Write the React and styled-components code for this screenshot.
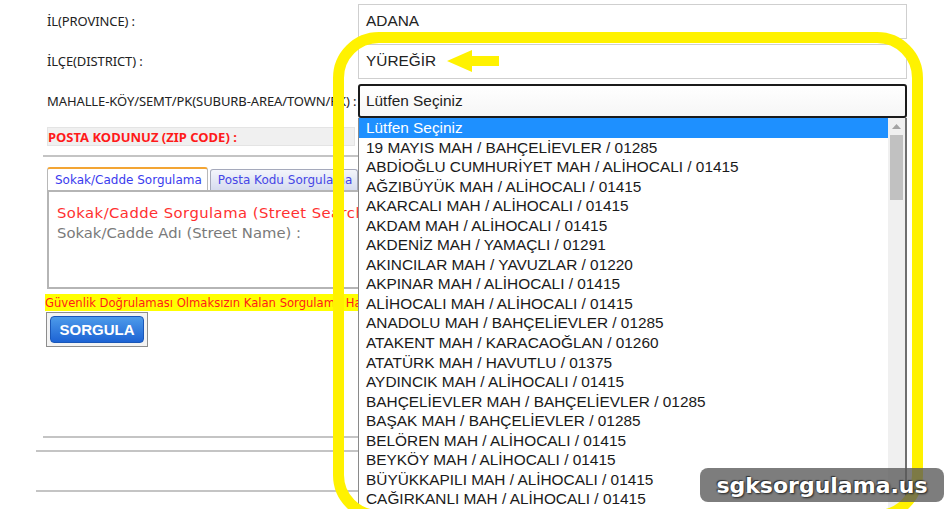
import React from 'react';
import styled, { createGlobalStyle } from 'styled-components';

const GlobalStyle = createGlobalStyle`
    html, body {
        margin: 0;
        padding: 0;
        background: #ffffff;
    }
    body {
        font-family: "Liberation Sans", Arial, sans-serif;
    }
`;

const Page = styled.div`
    position: relative;
    width: 945px;
    height: 509px;
    overflow: hidden;
    background: #ffffff;
`;

const FormArea = styled.div`
    padding: 1px 0 0 47px;
    width: 860px;
`;

const FieldRow = styled.div`
    display: grid;
    grid-template-columns: 311px 549px;
    align-items: center;
    height: ${props => props.h || 40}px;
`;

const Label = styled.div`
    font-family: "Noto Sans", "Open Sans", sans-serif;
    font-size: 13px;
    color: #222;
    white-space: nowrap;
    letter-spacing: -0.1px;
`;

const ZipLabel = styled.div`
    grid-column: 1 / 2;
    align-self: start;
    background: #f0f0f0;
    border: 1px solid #e4e4e4;
    height: 19px;
    line-height: 18px;
    font-family: "Noto Sans", "Open Sans", sans-serif;
    font-size: 13px;
    font-weight: bold;
    color: #ff1a1a;
    box-sizing: border-box;
    width: 308px;
    margin-top: 6px;
`;

const TextBox = styled.div`
    height: 35px;
    box-sizing: border-box;
    border: 1px solid #cfcfcf;
    display: flex;
    align-items: center;
    padding-left: 7px;
    font-size: 15.4px;
    color: #222;
`;

const SelectWrap = styled.div`
    position: relative;
    height: 34px;
`;

const SelectBox = styled.div`
    height: 34px;
    box-sizing: border-box;
    border: 2px solid #1b1b1b;
    border-radius: 3px;
    background: linear-gradient(#ffffff, #f6f6f6);
    display: flex;
    align-items: center;
    padding-left: 6px;
    font-size: 15.4px;
    color: #222;
`;

const DropList = styled.div`
    position: absolute;
    left: 0;
    top: 34px;
    width: 549px;
    height: 400px;
    box-sizing: border-box;
    border-left: 1px solid #8a8a8a;
    border-right: 2px solid #6f6f6f;
    background: #ffffff;
    display: grid;
    grid-template-columns: 1fr 17px;
    z-index: 2;
`;

const Options = styled.div`
    display: flex;
    flex-direction: column;
`;

const Option = styled.div`
    height: 19.55px;
    line-height: 19.5px;
    padding-left: 7px;
    font-size: 15.4px;
    white-space: nowrap;
    color: ${props => (props.selected ? '#ffffff' : '#1a1a1a')};
    background: ${props => (props.selected ? '#1e90ff' : 'transparent')};
`;

const ScrollTrack = styled.div`
    background: #f0f0f0;
    display: flex;
    flex-direction: column;
    align-items: center;
    padding-top: 6px;
`;

const ScrollThumb = styled.div`
    width: 13px;
    height: 65px;
    margin-top: 6px;
    background: #c1c1c1;
`;

const Rule = styled.div`
    height: 0;
    border-top: 2px solid #c4c4c4;
    margin-left: ${props => props.left}px;
    margin-top: ${props => props.top}px;
    width: ${props => 907 - props.left}px;
`;

const TabsArea = styled.div`
    margin: 10px 0 0 47px;
    width: 860px;
`;

const TabBar = styled.div`
    display: flex;
    gap: 2px;
    height: 23px;
    align-items: flex-end;
`;

const Tab = styled.div`
    height: ${props => (props.active ? 23 : 21)}px;
    box-sizing: border-box;
    padding: 0 5px 0 7px;
    display: flex;
    align-items: center;
    font-family: "DejaVu Sans", Verdana, sans-serif;
    font-size: 12px;
    color: ${props => (props.active ? '#3b3bee' : '#4646e6')};
    border: 1px solid ${props => (props.active ? '#b8b8b8' : '#a5a9bb')};
    border-top: ${props => (props.active ? '2px solid #f3a534' : '1px solid #a5a9bb')};
    border-bottom: none;
    border-radius: 3px 3px 0 0;
    background: ${props => (props.active ? '#ffffff' : 'linear-gradient(#f3f5fb, #d6dcef)')};
    white-space: nowrap;
`;

const TabPanel = styled.div`
    height: 99px;
    box-sizing: border-box;
    border: 2px solid #b5b5b5;
    padding: 11px 0 0 8px;
    font-family: "DejaVu Sans", Verdana, sans-serif;
    font-size: 14.8px;
    line-height: 20px;
`;

const PanelTitle = styled.div`
    color: #ff3030;
    letter-spacing: 0.45px;
`;

const PanelField = styled.div`
    color: #7a7a7a;
`;

/* the open option list covers the rest of this bar */
const Notice = styled.div`
    margin: 5px 0 0 45px;
    height: 17px;
    line-height: 17px;
    width: max-content;
    padding-right: 2px;
    background: #ffff00;
    color: #ff1a1a;
    font-family: "DejaVu Sans Condensed", "DejaVu Sans", sans-serif;
    font-size: 12.9px;
    white-space: nowrap;
`;

const ButtonFrame = styled.div`
    margin: 1px 0 0 46px;
    width: 102px;
    height: 35px;
    box-sizing: border-box;
    border: 1px solid #8d8d8d;
    padding: 3px;
    background: #f3f3f3;
`;

const SubmitButton = styled.div`
    height: 100%;
    border-radius: 4px;
    background: linear-gradient(#4d9bea, #1d63d4);
    border: 1px solid #1a57b8;
    box-sizing: border-box;
    display: flex;
    align-items: center;
    justify-content: center;
    color: #ffffff;
    font-family: "Liberation Sans", Arial, sans-serif;
    font-weight: bold;
    font-size: 15px;
`;

const HighlightFrame = styled.div`
    position: absolute;
    left: 333px;
    top: 32px;
    width: 590px;
    height: 489px;
    box-sizing: border-box;
    border: 11px solid #fff200;
    border-radius: 46px;
    z-index: 3;
    pointer-events: none;
`;

const Arrow = styled.svg`
    position: absolute;
    left: 447px;
    top: 50px;
    z-index: 3;
`;

const Watermark = styled.div`
    position: absolute;
    left: 700px;
    top: 468px;
    width: 244px;
    height: 34px;
    border-radius: 8px;
    background: rgba(88, 88, 88, 0.78);
    z-index: 4;
    display: flex;
    align-items: center;
    justify-content: center;
    font-family: "DejaVu Sans", Verdana, sans-serif;
    font-weight: bold;
    font-size: 22px;
    color: #ffffff;
    text-shadow: 1px 1px 2px #222, -1px -1px 1px #333;
`;

const neighbourhoods = [
    'Lütfen Seçiniz',
    '19 MAYIS MAH / BAHÇELİEVLER / 01285',
    'ABDİOĞLU CUMHURİYET MAH / ALİHOCALI / 01415',
    'AĞZIBÜYÜK MAH / ALİHOCALI / 01415',
    'AKARCALI MAH / ALİHOCALI / 01415',
    'AKDAM MAH / ALİHOCALI / 01415',
    'AKDENİZ MAH / YAMAÇLI / 01291',
    'AKINCILAR MAH / YAVUZLAR / 01220',
    'AKPINAR MAH / ALİHOCALI / 01415',
    'ALİHOCALI MAH / ALİHOCALI / 01415',
    'ANADOLU MAH / BAHÇELİEVLER / 01285',
    'ATAKENT MAH / KARACAOĞLAN / 01260',
    'ATATÜRK MAH / HAVUTLU / 01375',
    'AYDINCIK MAH / ALİHOCALI / 01415',
    'BAHÇELİEVLER MAH / BAHÇELİEVLER / 01285',
    'BAŞAK MAH / BAHÇELİEVLER / 01285',
    'BELÖREN MAH / ALİHOCALI / 01415',
    'BEYKÖY MAH / ALİHOCALI / 01415',
    'BÜYÜKKAPILI MAH / ALİHOCALI / 01415',
    'CAĞIRKANLI MAH / ALİHOCALI / 01415',
];

function App() {
    return (
        <Page>
            <GlobalStyle />
            <FormArea>
                <FieldRow>
                    <Label>İL(PROVINCE) :</Label>
                    <TextBox>ADANA</TextBox>
                </FieldRow>
                <FieldRow>
                    <Label>İLÇE(DISTRICT) :</Label>
                    <TextBox>YÜREĞİR</TextBox>
                </FieldRow>
                <FieldRow>
                    <Label>MAHALLE-KÖY/SEMT/PK(SUBURB-AREA/TOWN/PK) :</Label>
                    <SelectWrap>
                        <SelectBox>Lütfen Seçiniz</SelectBox>
                        <DropList>
                            <Options>
                                {neighbourhoods.map((name, i) => (
                                    <Option key={name} selected={i === 0}>{name}</Option>
                                ))}
                            </Options>
                            <ScrollTrack>
                                <svg width="9" height="5" viewBox="0 0 9 5">
                                    <path d="M0 5 L4.5 0 L9 5 Z" fill="#a3a3a3" />
                                </svg>
                                <ScrollThumb />
                            </ScrollTrack>
                        </DropList>
                    </SelectWrap>
                </FieldRow>
                <FieldRow h={32}>
                    <ZipLabel>POSTA KODUNUZ (ZIP CODE) :</ZipLabel>
                </FieldRow>
            </FormArea>
            <Rule left={43} top={2} />
            <TabsArea>
                <TabBar>
                    <Tab active>Sokak/Cadde Sorgulama</Tab>
                    <Tab>Posta Kodu Sorgulama</Tab>
                </TabBar>
                <TabPanel>
                    <PanelTitle>Sokak/Cadde Sorgulama (Street Search)</PanelTitle>
                    <PanelField>Sokak/Cadde Adı (Street Name) :</PanelField>
                </TabPanel>
            </TabsArea>
            <Notice>Güvenlik Doğrulaması Olmaksızın Kalan Sorgulama Ha</Notice>
            <ButtonFrame>
                <SubmitButton>SORGULA</SubmitButton>
            </ButtonFrame>
            <Rule left={43} top={89} />
            <Rule left={36} top={12} />
            <Rule left={36} top={38} />
            <HighlightFrame />
            <Arrow width="52" height="22" viewBox="0 0 52 22">
                <path d="M0 11 L25 0 L25 6 L52 6 L52 16 L25 16 L25 22 Z" fill="#fff200" />
            </Arrow>
            <Watermark>sgksorgulama.us</Watermark>
        </Page>
    );
}

export default App;
